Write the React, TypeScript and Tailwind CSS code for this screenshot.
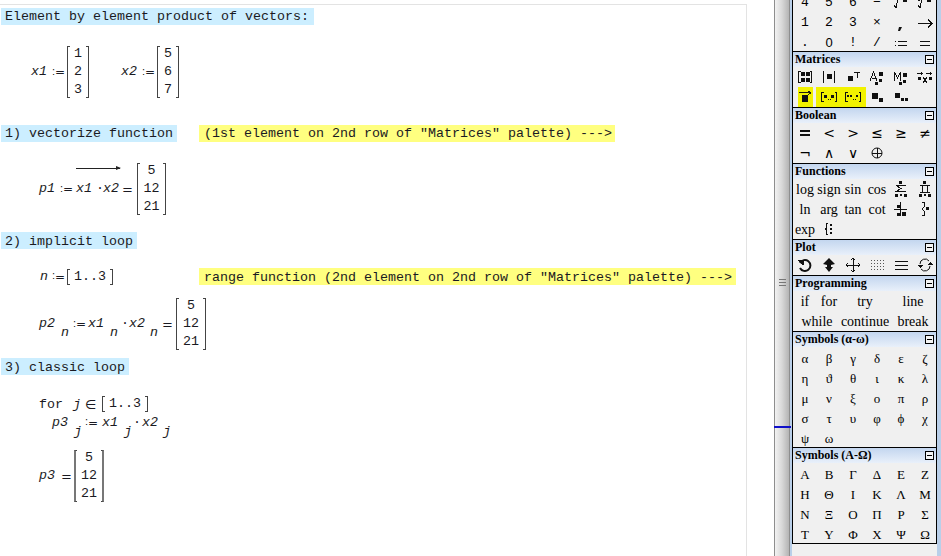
import type { ReactNode } from "react";

const MONO = "font-['Liberation_Mono',monospace] text-[13.33px]";

function Note({ color, className = "", children }: { color: "blue" | "yellow"; className?: string; children: ReactNode }) {
  return (
    <div
      className={`h-[17px] leading-[17px] whitespace-pre ${color === "blue" ? "bg-[#cceeff] pl-[4px]" : "bg-[#ffff80] pl-[5px]"} ${className}`}
    >
      {children}
    </div>
  );
}

function Var({ children, className = "" }: { children: ReactNode; className?: string }) {
  return <span className={`italic ${className}`}>{children}</span>;
}

function Sub({ children, className = "" }: { children: ReactNode; className?: string }) {
  return <span className={`inline-block translate-y-[9px] italic ${className}`}>{children}</span>;
}

function Assign({ className = "" }: { className?: string }) {
  return (
    <span className={`flex w-[13px] items-center justify-between leading-none ${className}`}>
      <span className="-mt-[2px] font-['Liberation_Sans',sans-serif] text-[11px]">:</span>
      <span className="font-['DejaVu_Sans',sans-serif] text-[12px]">=</span>
    </span>
  );
}

function Eq({ className = "" }: { className?: string }) {
  return <span className={`w-[11px] font-['DejaVu_Sans',sans-serif] text-[13px] leading-none ${className}`}>=</span>;
}

function Bracket({ side, heavy, height = "h-[52px]" }: { side: "l" | "r"; heavy?: boolean; height?: string }) {
  const edge = side === "l" ? "border-l" : "border-r";
  const look = heavy ? `${side === "l" ? "border-l-2" : "border-r-2"} border-[#777]` : `${edge} border-[#444]`;
  return <span className={`block w-[3px] border-y border-y-[#444] ${height} ${look}`} />;
}

function Matrix({ values, width, heavy, className = "" }: { values: string[]; width: string; heavy?: boolean; className?: string }) {
  return (
    <div className={`flex h-[52px] shrink-0 ${width} ${className}`}>
      <Bracket side="l" heavy={heavy} />
      <div className="flex flex-1 flex-col items-center justify-center leading-[18px]">
        {values.map((v) => (
          <span key={v}>{v}</span>
        ))}
      </div>
      <Bracket side="r" heavy={heavy} />
    </div>
  );
}

function Range({ className = "" }: { className?: string }) {
  return (
    <span className={`flex h-[16px] items-center ${className}`}>
      <Bracket side="l" height="h-[16px]" />
      <span className="mx-[4px] leading-none">1..3</span>
      <Bracket side="r" height="h-[16px]" />
    </span>
  );
}

function Dot({ className = "" }: { className?: string }) {
  return <span className={`w-[4px] text-center ${className}`}>·</span>;
}

function Worksheet() {
  return (
    <div className={`h-[552px] w-[747px] border-t border-r border-[#e3e3e3] bg-white pt-[3px] text-[#1a1a22] ${MONO}`}>
      <Note color="blue" className="ml-px w-[313px]">Element by element product of vectors:</Note>

      <div className="mt-[21px] flex h-[52px] items-center">
        <Var className="ml-[31px]">x1</Var>
        <Assign className="ml-[5px]" />
        <Matrix values={["1", "2", "3"]} width="w-[22px]" className="ml-[2px]" />
        <Var className="ml-[32px]">x2</Var>
        <Assign className="ml-[5px]" />
        <Matrix values={["5", "6", "7"]} width="w-[22px]" className="ml-[2px]" />
      </div>

      <div className="mt-[27px] flex">
        <Note color="blue" className="ml-px w-[176px]">1) vectorize function</Note>
        <Note color="yellow" className="ml-[22px] w-[416px]">(1st element on 2nd row of "Matrices" palette) ---&gt;</Note>
      </div>

      <div className="mt-[21px] flex h-[52px] items-center">
        <Var className="ml-[39px]">p1</Var>
        <Assign className="ml-[5px]" />
        <span className="relative ml-[3px] flex items-center">
          <span className="absolute -top-[11px] left-0 h-px w-[44px] bg-[#222]">
            <span className="absolute -top-[2px] -right-px border-y-[2.5px] border-l-[5px] border-y-transparent border-l-[#222]" />
          </span>
          <Var>x1</Var>
          <Dot className="ml-[4px]" />
          <Var className="ml-[3px]">x2</Var>
        </span>
        <Eq className="ml-[3px]" />
        <Matrix values={["5", "12", "21"]} width="w-[29px]" className="ml-[4px]" />
      </div>

      <Note color="blue" className="mt-[17px] ml-px w-[136px] pt-px">2) implicit loop</Note>

      <div className="mt-[19px] flex h-[17px] items-center">
        <Var className="ml-[40px]">n</Var>
        <Assign className="ml-[4px]" />
        <Range className="ml-[2px]" />
        <Note color="yellow" className="ml-[86px] w-[537px] pt-px">range function (2nd element on 2nd row of "Matrices" palette) ---&gt;</Note>
      </div>

      <div className="mt-[13px] flex h-[52px] items-center">
        <Var className="ml-[39px]">p2</Var>
        <Sub className="ml-[6px]">n</Sub>
        <Assign className="ml-[4px]" />
        <Var className="ml-[2px]">x1</Var>
        <Sub className="ml-[6px]">n</Sub>
        <Dot className="ml-[3px]" />
        <Var className="ml-[4px]">x2</Var>
        <Sub className="ml-[5px]">n</Sub>
        <Eq className="ml-[4px]" />
        <Matrix values={["5", "12", "21"]} width="w-[30px]" className="ml-[3px]" />
      </div>

      <Note color="blue" className="mt-[8px] ml-px w-[128px] pt-px">3) classic loop</Note>

      <div className="mt-[21px] flex h-[16px] items-center">
        <span className="ml-[39px] pt-px">for</span>
        <Var className="ml-[10px] pt-px">j</Var>
        <span className="ml-[4px] w-[9px] font-['DejaVu_Sans',sans-serif] text-[13px] leading-none">∈</span>
        <Range className="ml-[8px]" />
      </div>
      <div className="mt-[2px] flex h-[17px] items-center">
        <Var className="ml-[52px]">p3</Var>
        <Sub className="ml-[6px]">j</Sub>
        <Assign className="ml-[3px]" />
        <Var className="ml-[4px]">x1</Var>
        <Sub className="ml-[6px]">j</Sub>
        <Dot className="ml-px" />
        <Var className="ml-[5px]">x2</Var>
        <Sub className="ml-[5px]">j</Sub>
      </div>

      <div className="mt-[19px] flex h-[52px] items-center">
        <Var className="ml-[39px]">p3</Var>
        <Eq className="ml-[6px]" />
        <Matrix values={["5", "12", "21"]} width="w-[30px]" heavy className="ml-[2px]" />
      </div>
    </div>
  );
}

function Icon({ children }: { children: ReactNode }) {
  return (
    <svg width="16" height="16" viewBox="0 0 16 16" shapeRendering="crispEdges" fill="#111" stroke="none">
      {children}
    </svg>
  );
}

const Sq = ({ x, y, s = 4 }: { x: number; y: number; s?: number }) => <rect x={x} y={y} width={s} height={s} />;
const Line = ({ d, w = 1 }: { d: string; w?: number }) => <path d={d} fill="none" stroke="#111" strokeWidth={w} />;

const MATRIX_ICONS = [
  <Icon key="m"><Line d="M3.5 2.5H1.5V13.5H3.5M12.5 2.5H14.5V13.5H12.5" /><Sq x={4} y={3} /><Sq x={9} y={3} /><Sq x={4} y={9} /><Sq x={9} y={9} /></Icon>,
  <Icon key="d"><Line d="M2.5 2V14M13.5 2V14" /><Sq x={6} y={5} s={5} /></Icon>,
  <Icon key="t"><Sq x={3} y={7} s={5} /><Line d="M9 3.5H15M12.5 3V9" /></Icon>,
  <Icon key="a"><Line d="M1 12L4.5 3L8 12M2.5 9H6.5" /><Sq x={10} y={3} s={4} /><Sq x={10} y={10} s={3} /><Sq x={6} y={13} s={3} /></Icon>,
  <Icon key="c"><Line d="M1.5 12V3L4.5 9L7.5 3V12" /><Sq x={10} y={4} s={4} /><Sq x={10} y={11} s={3} /><Sq x={6} y={13} s={3} /></Icon>,
  <Icon key="x"><Line d="M0 4.5H6M4 3V6M9 4.5H15M13 3V6" /><Sq x={1} y={8} s={3} /><Sq x={12} y={8} s={3} /><Line d="M6 8L10 14M10 8L6 14" /></Icon>,
];

const FUNCTION_ICONS: Record<string, ReactNode> = {
  sum: <Icon><Sq x={6} y={0} s={3} /><Line d="M3 4.5H13M3 4.5L8 7.5L3 10.5H13" /><Sq x={2} y={13} s={3} /><Sq x={7} y={13} s={2} /><Sq x={11} y={13} s={3} /></Icon>,
  prod: <Icon><Sq x={6} y={0} s={3} /><Line d="M3 4.5H13M5.5 4.5V11.5M10.5 4.5V11.5M3 11.5H13" /><Sq x={2} y={13} s={3} /><Sq x={7} y={13} s={2} /><Sq x={11} y={13} s={3} /></Icon>,
  diff: <Icon><Line d="M1 8.5H14M7.5 1V8" /><Sq x={4} y={4} s={3} /><Line d="M7.5 9V15" /><Sq x={4} y={12} s={3} /><Sq x={9} y={11} s={4} /></Icon>,
  int: <Icon><Line d="M5 1.5H7.5V5L5.5 8L7.5 11V14.5H5" /><Sq x={9} y={6} s={3} /></Icon>,
};

const PLOT_ICONS = [
  <Icon key="rot"><path d="M3 6a5.5 5.5 0 1 1 0 5" fill="none" stroke="#111" strokeWidth="2" shapeRendering="auto" /><path d="M1 3h6v5H5z" /></Icon>,
  <Icon key="zoom"><path d="M8 1L14 7L10 8V10H12L8 15L4 10H6V8L2 7Z" shapeRendering="auto" /></Icon>,
  <Icon key="pan"><Line d="M8 1V15M1 8H15M6 3L8 1L10 3M6 13L8 15L10 13M3 6L1 8L3 10M13 6L15 8L13 10" /></Icon>,
  <Icon key="grid">
    {[4, 7, 10, 13].flatMap((y) => [2, 5, 8, 11, 14].map((x) => <rect key={`${x}-${y}`} x={x} y={y - 1} width="1" height="1" fill="#555" />))}
  </Icon>,
  <Icon key="lines"><rect x="2" y="4" width="13" height="1" /><rect x="2" y="8" width="13" height="1" /><rect x="2" y="12" width="13" height="1" /></Icon>,
  <Icon key="orbit"><path d="M3 7a5 5 0 0 1 9-3M13 9a5 5 0 0 1-9 3" fill="none" stroke="#111" strokeWidth="1" shapeRendering="auto" /><path d="M0 8h6l-3 3zM10 8h6l-3-3z" /></Icon>,
];

function Cell({ children, className = "" }: { children?: ReactNode; className?: string }) {
  return <div className={`flex h-[20px] items-center justify-center ${className}`}>{children}</div>;
}

function Palette({ title, children, flush }: { title?: string; children: ReactNode; flush?: boolean }) {
  return (
    <section className={`w-[145px] border-x border-black bg-[#f0f0f0] ${flush ? "" : "border-t"}`}>
      {title && (
        <div className="flex h-[15px] items-center justify-between bg-gradient-to-b from-[#c3d6ef] to-[#e9f0fa] px-[2px]">
          <span className="pb-[2px] font-['Liberation_Serif',serif] text-[12px] leading-none font-bold text-black">{title}</span>
          <span className="relative block h-[9px] w-[9px] border border-black bg-[#f4f4f4] after:absolute after:top-[3px] after:left-[1px] after:h-px after:w-[5px] after:bg-black" />
        </div>
      )}
      <div className="grid grid-cols-[repeat(6,24px)]">{children}</div>
    </section>
  );
}

function Glyphs({ items, className }: { items: string[]; className: string }) {
  return (
    <>
      {items.map((g, i) => (
        <Cell key={`${g}-${i}`} className={className}>
          {g}
        </Cell>
      ))}
    </>
  );
}

const SERIF = "font-['Liberation_Serif',serif] text-[14px] text-black";
const GLYPH = "pt-[3px] font-['Liberation_Mono',monospace] text-[13px] text-black";
const GREEK = "pt-[3px] font-['Liberation_Serif',serif] text-[13px] text-black";

export default function App() {
  return (
    <div className="flex h-[556px] w-[941px] overflow-hidden bg-white">
      <div className="w-[774px] shrink-0 pt-[4px]">
        <Worksheet />
      </div>

      {/* splitter between sheet and palettes */}
      <div className="relative flex w-[16px] shrink-0 flex-col items-center justify-center border-x border-[#8e8e8e] bg-gradient-to-r from-[#f2f2f2] via-[#d8d8d8] to-[#b4b4b4]">
        <span className="mb-[-8px] block h-[7px] w-[7px] border-y border-[#777] after:mt-[2px] after:block after:h-px after:bg-[#777]" />
        <span className="absolute top-[426px] -left-px h-[2px] w-[17px] bg-[#1010c8]" />
      </div>

      <div className="flex-1 bg-[#b9cfe9]">
        <div className="-mt-[9px] ml-[2px]">
          <Palette flush>
            <Glyphs items={["4", "5", "6", "−"]} className={GLYPH} />
            <Cell className="pt-[3px]"><Icon><Line d="M1 10L3 13L5 3H9" /><Sq x={10} y={3} s={4} /></Icon></Cell>
            <Cell className="pt-[3px]"><Icon><Line d="M1 10L3 13L5 3H9" /><Sq x={1} y={4} s={2} /><Sq x={10} y={3} s={4} /></Icon></Cell>
            <Glyphs items={["1", "2", "3", "×"]} className={GLYPH} />
            <Cell className="pt-[3px]"><Icon><path d="M6 12h3l-2 4H5z" shapeRendering="auto" /></Icon></Cell>
            <Cell className="pt-[3px]"><Icon><Line d="M1 8.5H15M11 4.5L15 8.5L11 12.5" /></Icon></Cell>
            <Cell className={GLYPH}>.</Cell>
            <Cell className="pt-[3px] font-['Liberation_Sans',sans-serif] text-[13px] text-black">0</Cell>
            <Cell className={GLYPH}>!</Cell>
            <Cell className={GLYPH}>/</Cell>
            <Cell className="pt-[3px]"><Icon><Sq x={2} y={6} s={1} /><Sq x={2} y={10} s={1} /><rect x="5" y="6" width="9" height="1" /><rect x="5" y="10" width="9" height="1" /></Icon></Cell>
            <Cell className="pt-[3px]"><Icon><rect x="3" y="6" width="10" height="1" /><rect x="3" y="10" width="10" height="1" /></Icon></Cell>
          </Palette>

          <Palette title="Matrices">
            {MATRIX_ICONS.map((icon, i) => (
              <Cell key={i}>{icon}</Cell>
            ))}
            <Cell>
              <div className="flex h-[20px] w-[15px] items-center justify-center bg-[#f2f200]">
                <Icon><Line d="M1 3.5H14M11 1.5L14 3.5L11 5.5" /><Sq x={4} y={6} s={7} /></Icon>
              </div>
            </Cell>
            <Cell className="col-span-2 -mx-px gap-[8px] bg-[#f2f200]">
              <Icon><Line d="M2.5 3.5H0.5V12.5H2.5M13.5 3.5H15.5V12.5H13.5" /><Sq x={3} y={6} s={3} /><Sq x={10} y={6} s={3} /><rect x="7" y="10" width="1" height="1" /><rect x="8.5" y="10" width="1" height="1" /></Icon>
              <Icon><Line d="M2.5 3.5H0.5V12.5H2.5M13.5 3.5H15.5V12.5H13.5" /><Sq x={2} y={6} s={2} /><Sq x={5} y={6} s={2} /><Sq x={11} y={6} s={2} /><rect x="8" y="10" width="1" height="1" /><rect x="9.5" y="10" width="1" height="1" /></Icon>
            </Cell>
            <Cell><Icon><Sq x={3} y={4} s={6} /><Sq x={10} y={9} s={4} /></Icon></Cell>
            <Cell><Icon><Sq x={2} y={4} s={5} /><Sq x={8} y={9} s={3} /><Sq x={12} y={9} s={3} /></Icon></Cell>
            <Cell />
          </Palette>

          <Palette title="Boolean">
            <Cell><Icon><rect x="3" y="5" width="10" height="2" /><rect x="3" y="9" width="10" height="2" /></Icon></Cell>
            <Glyphs items={["<", ">", "≤", "≥", "≠", "¬", "∧", "∨"]} className="font-['DejaVu_Sans',sans-serif] text-[14px] text-black" />
            <Cell><Icon><circle cx="8" cy="8" r="5" fill="none" stroke="#111" shapeRendering="auto" /><Line d="M3 8.5H13M8.5 3V13" /></Icon></Cell>
            <Cell />
            <Cell />
          </Palette>

          <Palette title="Functions">
            <Glyphs items={["log", "sign", "sin", "cos"]} className={SERIF} />
            <Cell>{FUNCTION_ICONS.sum}</Cell>
            <Cell>{FUNCTION_ICONS.prod}</Cell>
            <Glyphs items={["ln", "arg", "tan", "cot"]} className={SERIF} />
            <Cell>{FUNCTION_ICONS.diff}</Cell>
            <Cell>{FUNCTION_ICONS.int}</Cell>
            <Cell className={SERIF}>exp</Cell>
            <Cell><Icon><Line d="M7 2.5H6L5.5 3V7L4 8L5.5 9V13L6 13.5H7" /><Sq x={9} y={3} s={2} /><Sq x={9} y={7} s={2} /><Sq x={9} y={11} s={2} /></Icon></Cell>
          </Palette>

          <Palette title="Plot">
            {PLOT_ICONS.map((icon, i) => (
              <Cell key={i}>{icon}</Cell>
            ))}
          </Palette>

          <Palette title="Programming">
            <Cell className={SERIF}>if</Cell>
            <Cell className={SERIF}>for</Cell>
            <Cell className={`col-span-2 ${SERIF}`}>try</Cell>
            <Cell className={`col-span-2 ${SERIF}`}>line</Cell>
            <Cell className={`col-span-2 ${SERIF}`}>while</Cell>
            <Cell className={`col-span-2 ${SERIF}`}>continue</Cell>
            <Cell className={`col-span-2 ${SERIF}`}>break</Cell>
          </Palette>

          <Palette title="Symbols (α-ω)">
            <Glyphs
              items={["α", "β", "γ", "δ", "ε", "ζ", "η", "ϑ", "θ", "ι", "κ", "λ", "μ", "ν", "ξ", "ο", "π", "ρ", "σ", "τ", "υ", "φ", "ϕ", "χ", "ψ", "ω"]}
              className={GREEK}
            />
          </Palette>

          <Palette title="Symbols (Α-Ω)">
            <Glyphs
              items={["Α", "Β", "Γ", "Δ", "Ε", "Ζ", "Η", "Θ", "Ι", "Κ", "Λ", "Μ", "Ν", "Ξ", "Ο", "Π", "Ρ", "Σ", "Τ", "Υ", "Φ", "Χ", "Ψ", "Ω"]}
              className={GREEK}
            />
          </Palette>
          <div className="h-px w-[145px] bg-black" />
          <div className="h-[14px] w-[145px] bg-[#f0f0f0]" />
        </div>
      </div>
    </div>
  );
}
